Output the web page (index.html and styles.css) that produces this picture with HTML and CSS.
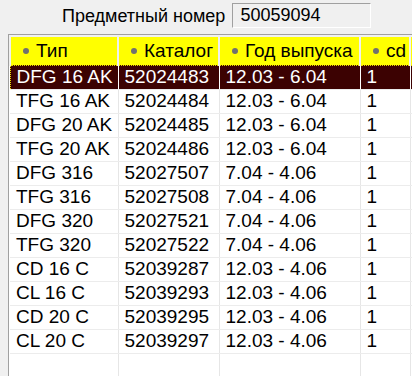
FILE: index.html
```html
<!DOCTYPE html>
<html lang="ru">
<head>
  <meta charset="UTF-8">
  <title>Предметный номер</title>
  <link rel="stylesheet" href="styles.css">
</head>
<body>
  <div class="top">
    <span class="label">Предметный номер</span>
    <div class="field">50059094</div>
  </div>

  <div class="grid">
    <table>
      <colgroup>
        <col class="c1"><col class="c2"><col class="c3"><col class="c4"><col>
      </colgroup>
      <thead>
        <tr>
          <th><span class="dot"></span>Тип</th>
          <th><span class="dot"></span>Каталог</th>
          <th><span class="dot"></span>Год выпуска</th>
          <th><span class="dot"></span>cd</th>
          <th></th>
        </tr>
      </thead>
      <tbody>
        <tr class="sel"><td>DFG 16 AK</td><td>52024483</td><td>12.03 - 6.04</td><td>1</td><td></td></tr>
        <tr><td>TFG 16 AK</td><td>52024484</td><td>12.03 - 6.04</td><td>1</td><td></td></tr>
        <tr><td>DFG 20 AK</td><td>52024485</td><td>12.03 - 6.04</td><td>1</td><td></td></tr>
        <tr><td>TFG 20 AK</td><td>52024486</td><td>12.03 - 6.04</td><td>1</td><td></td></tr>
        <tr><td>DFG 316</td><td>52027507</td><td>7.04 - 4.06</td><td>1</td><td></td></tr>
        <tr><td>TFG 316</td><td>52027508</td><td>7.04 - 4.06</td><td>1</td><td></td></tr>
        <tr><td>DFG 320</td><td>52027521</td><td>7.04 - 4.06</td><td>1</td><td></td></tr>
        <tr><td>TFG 320</td><td>52027522</td><td>7.04 - 4.06</td><td>1</td><td></td></tr>
        <tr><td>CD 16 C</td><td>52039287</td><td>12.03 - 4.06</td><td>1</td><td></td></tr>
        <tr><td>CL 16 C</td><td>52039293</td><td>12.03 - 4.06</td><td>1</td><td></td></tr>
        <tr><td>CD 20 C</td><td>52039295</td><td>12.03 - 4.06</td><td>1</td><td></td></tr>
        <tr><td>CL 20 C</td><td>52039297</td><td>12.03 - 4.06</td><td>1</td><td></td></tr>
        <tr><td></td><td></td><td></td><td></td><td></td></tr>
      </tbody>
    </table>
  </div>
</body>
</html>
```

FILE: styles.css
```css
body {
  margin: 0;
  height: 376px;
  overflow: hidden;
  background: #f0f0f0;
  font-family: "Liberation Sans", Arial, sans-serif;
  font-size: 18px;
  color: #000;
}

.top {
  display: flex;
  align-items: center;
  height: 34px;
  padding-left: 62px;
  box-sizing: border-box;
}
.label {
  margin-right: 7px;
  margin-top: -1px;
}
.field {
  width: 130px;
  height: 23px;
  line-height: 23px;
  padding-left: 7px;
  border: 1px solid #fff;
  border-top-color: #a0a0a0;
  border-left-color: #a0a0a0;
  margin-top: -3px;
}

.grid {
  margin-left: 8px;
  border-top: 1px solid #a0a0a0;
  border-left: 1px solid #a0a0a0;
  background: #fff;
  height: 341px;
  overflow: hidden;
}
table {
  border-collapse: collapse;
  table-layout: fixed;
  width: 420px;
  font-size: 19px;
}
col.c1 { width: 108px; }
col.c2 { width: 101px; }
col.c3 { width: 141px; }
col.c4 { width: 50px; }

th {
  height: 29px;
  padding: 0 0 0 12px;
  box-sizing: border-box;
  text-align: left;
  font-weight: normal;
  background: #ffff00;
  border-top: 2px solid #f0f0f0;
  border-left: 2px solid #f0f0f0;
  border-right: 1px solid #a0a0a0;
  white-space: nowrap;
}
.dot {
  display: inline-block;
  width: 6px;
  height: 6px;
  border-radius: 50%;
  background: #707070;
  margin-right: 7px;
  vertical-align: 3px;
}

td {
  height: 24px;
  padding: 0 6px;
  box-sizing: border-box;
  border-right: 1px solid #e6e6e6;
  border-bottom: 1px solid #ececec;
  white-space: nowrap;
}
tr.sel td {
  background: #3c0202;
  color: #fff;
  border-top: 1px dotted #e8d800;
  border-right-color: #fff;
}
tr.sel td:first-child {
  border-left: 1px dotted #e8d800;
}
```
